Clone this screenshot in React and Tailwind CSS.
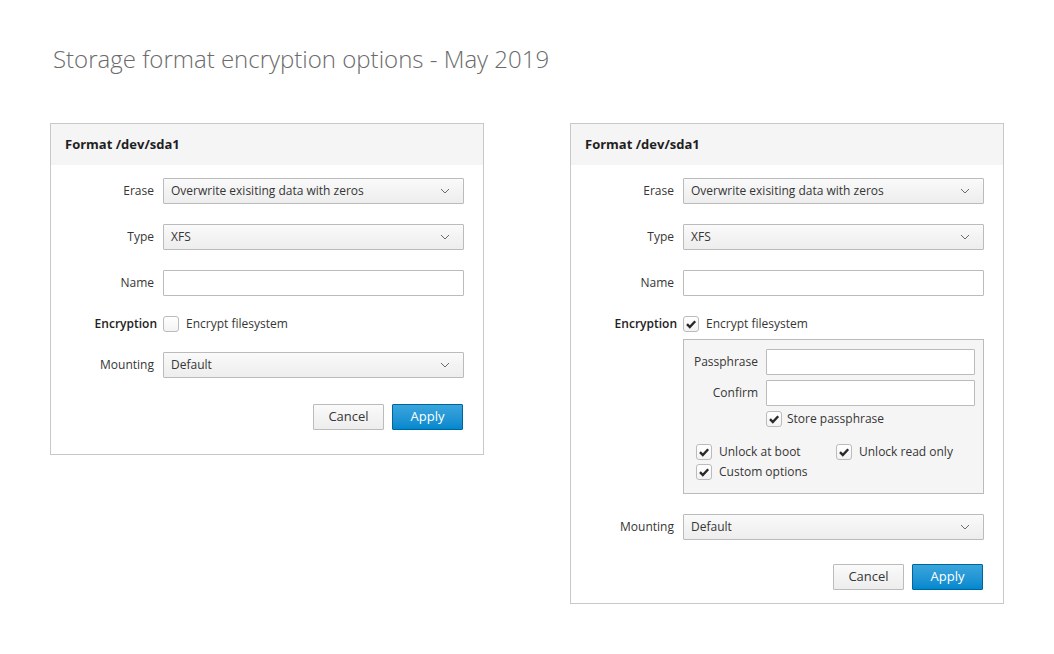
import React from 'react';

const Chevron = () => (
    <svg width="10" height="6" viewBox="0 0 10 6" className="shrink-0">
        <path d="M1 1 L5 5 L9 1" fill="none" stroke="#6a6a6a" strokeWidth="1" />
    </svg>
);

const Checkbox = ({ checked, label, gap = 'gap-[7px]' }) => (
    <label className={`flex items-center h-[16px] ${gap}`}>
        <span className="w-[16px] h-[16px] shrink-0 rounded-[3px] border border-[#bbbbbb] bg-gradient-to-b from-white to-[#f3f3f3] flex items-center justify-center">
            {checked && (
                <svg width="12" height="12" viewBox="0 0 12 12">
                    <path d="M2 6.2 L4.8 9 L10.2 3.2" fill="none" stroke="#292929" strokeWidth="2.4" strokeLinejoin="miter" />
                </svg>
            )}
        </span>
        <span className="text-[12px] text-[#363636] leading-[16px]">{label}</span>
    </label>
);

const Select = ({ value }) => (
    <div className="h-[26px] border border-[#bbbbbb] rounded-[1px] bg-gradient-to-b from-[#fafafa] to-[#ededed] flex items-center justify-between pl-[7px] pr-[13px] text-[12px] text-[#363636]">
        <span>{value}</span>
        <Chevron />
    </div>
);

const TextInput = () => (
    <div className="h-[26px] border border-[#bbbbbb] rounded-[1px] bg-white" />
);

const Row = ({ label, bold, children }) => (
    <div className="flex items-center">
        <div className={`w-[112px] shrink-0 text-right text-[12px] leading-[16px] ${bold ? 'pr-[6px] font-semibold text-[#222]' : 'pr-[9px] text-[#363636]'}`}>{label}</div>
        <div className="flex-1">{children}</div>
    </div>
);

const EncryptionBox = () => (
    <div className="ml-[112px] mt-[7px] border border-[#bbbbbb] bg-[#f5f5f5] pt-[9px] pb-[13px] pr-[8px]">
        <div className="flex items-center">
            <div className="w-[82px] shrink-0 pr-[8px] text-right text-[12px] text-[#363636]">Passphrase</div>
            <div className="flex-1"><TextInput /></div>
        </div>
        <div className="flex items-center mt-[5px]">
            <div className="w-[82px] shrink-0 pr-[8px] text-right text-[12px] text-[#363636]">Confirm</div>
            <div className="flex-1"><TextInput /></div>
        </div>
        <div className="ml-[82px] mt-[5px]">
            <Checkbox checked label="Store passphrase" gap="gap-[5px]" />
        </div>
        <div className="pl-[12px] mt-[17px] flex flex-col gap-[4px]">
            <div className="flex">
                <div className="w-[140px]"><Checkbox checked label="Unlock at boot" /></div>
                <Checkbox checked label="Unlock read only" />
            </div>
            <Checkbox checked label="Custom options" />
        </div>
    </div>
);

const FormatCard = ({ encrypted }) => (
    <div className="w-[434px] border border-[#c8c8c8] bg-white">
        <div className="h-[41px] bg-[#f5f5f5] flex items-center pl-[14px] text-[13px] font-bold text-[#1f1f1f]">
            Format /dev/sda1
        </div>
        <div className={`pt-[13px] pr-[19px] ${encrypted ? 'pb-[13px]' : 'pb-[24px]'}`}>
            <div className="flex flex-col gap-[20px]">
                <Row label="Erase"><Select value="Overwrite exisiting data with zeros" /></Row>
                <Row label="Type"><Select value="XFS" /></Row>
                <Row label="Name"><TextInput /></Row>
                <div>
                    <Row label="Encryption" bold>
                        <Checkbox checked={encrypted} label="Encrypt filesystem" />
                    </Row>
                    {encrypted && <EncryptionBox />}
                </div>
                <Row label="Mounting"><Select value="Default" /></Row>
            </div>
            <div className={`flex justify-end gap-[8px] pr-[1px] ${encrypted ? 'mt-[24px]' : 'mt-[26px]'}`}>
                <button className="w-[71px] h-[26px] border border-[#bbbbbb] rounded-[1px] bg-gradient-to-b from-[#fafafa] to-[#ededed] text-[13px] text-[#363636]">Cancel</button>
                <button className="w-[71px] h-[26px] border border-[#00659c] rounded-[1px] bg-gradient-to-b from-[#39a5dc] to-[#0088ce] text-[13px] text-white">Apply</button>
            </div>
        </div>
    </div>
);

export default function App() {
    return (
        <div className="w-[1054px] min-h-[654px] bg-white" style={{ fontFamily: '"Open Sans", sans-serif' }}>
            <h1 className="pl-[53px] pt-[42px] text-[24px] font-light text-[#6b6b6b] leading-[34px]">
                Storage format encryption options - May 2019
            </h1>
            <div className="flex items-start gap-[86px] pl-[50px] mt-[47px]">
                <FormatCard />
                <FormatCard encrypted />
            </div>
        </div>
    );
}
